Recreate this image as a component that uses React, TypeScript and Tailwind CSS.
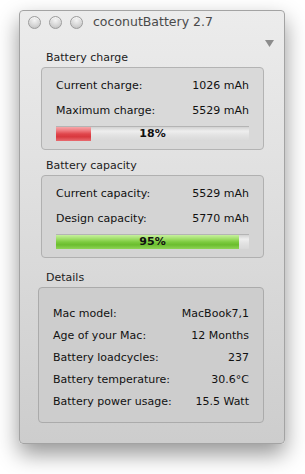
const font = { fontFamily: '"DejaVu Sans", "Liberation Sans", sans-serif' };

function Light() {
  return (
    <div className="h-[13px] w-[13px] rounded-full border border-[#9c9c9c] bg-[radial-gradient(circle_at_50%_30%,#f4f4f4_0%,#d6d6d6_55%,#b9b9b9_100%)] shadow-[inset_0_1px_1px_rgba(255,255,255,0.7)]" />
  );
}

function Row({ label, value, h = "h-[25px]" }: { label: string; value: string; h?: string }) {
  return (
    <div className={`flex ${h} items-center justify-between text-[11px] text-[#111]`}>
      <span>{label}</span>
      <span>{value}</span>
    </div>
  );
}

function Bar({ pct, kind }: { pct: number; kind: "red" | "green" }) {
  const fill =
    kind === "red"
      ? "bg-[linear-gradient(to_bottom,#f6a7aa_0%,#ef7b80_25%,#e0454b_50%,#d8383e_70%,#e86a6f_100%)]"
      : "bg-[linear-gradient(to_bottom,#c6f09e_0%,#a3e06d_25%,#7dcb3f_50%,#6bbd2e_70%,#8fd456_100%)]";
  return (
    <div className="relative mt-[2px] h-[15px] w-full border-t border-[#b4b4b4] bg-[linear-gradient(to_bottom,#d2d2d2_0%,#eeeeee_30%,#e2e2e2_60%,#d8d8d8_100%)]">
      <div className={`h-full ${fill}`} style={{ width: `${pct}%` }} />
      <span className="absolute inset-0 flex items-center justify-center text-[11px] font-bold text-[#111]">
        {pct}%
      </span>
    </div>
  );
}

export default function App() {
  return (
    <div className="h-[474px] w-[305px] overflow-hidden bg-white pl-[19px] pt-[10px]" style={font}>
      <div className="flex h-[434px] w-[266px] flex-col rounded-[4px] border border-[#a3a3a3] bg-[linear-gradient(to_bottom,#ececec_0%,#e3e3e3_30%,#d6d6d6_70%,#cdcdcd_100%)] shadow-[0_10px_22px_rgba(0,0,0,0.42)]">
        {/* title bar */}
        <div className="flex h-[23px] items-center pl-[8px]">
          <div className="flex gap-[8px]">
            <Light />
            <Light />
            <Light />
          </div>
          <span className="ml-[10px] text-[12.5px] text-[#4a4a4a]">coconutBattery 2.7</span>
        </div>

        <div className="flex h-[18px] items-center justify-end pr-[10px]">
          <svg width="9" height="7" viewBox="0 0 9 7">
            <path d="M0 0 L9 0 L4.5 7 Z" fill="#8c8c8c" />
          </svg>
        </div>

        {/* Battery charge */}
        <div className="ml-[26px] flex h-[13px] items-center text-[11px] text-[#222]">Battery charge</div>
        <div className="ml-[21px] mt-[2px] h-[83px] w-[223px] rounded-[4px] border border-[#b3b3b3] bg-[#d9d9d9] px-[14px] pt-[6px]">
          <Row label="Current charge:" value="1026 mAh" />
          <Row label="Maximum charge:" value="5529 mAh" />
          <Bar pct={18} kind="red" />
        </div>

        {/* Battery capacity */}
        <div className="ml-[26px] mt-[10px] flex h-[13px] items-center text-[11px] text-[#222]">Battery capacity</div>
        <div className="ml-[21px] mt-[2px] h-[83px] w-[223px] rounded-[4px] border border-[#b0b0b0] bg-[#d4d4d4] px-[14px] pt-[6px]">
          <Row label="Current capacity:" value="5529 mAh" />
          <Row label="Design capacity:" value="5770 mAh" />
          <Bar pct={95} kind="green" />
        </div>

        {/* Details */}
        <div className="ml-[26px] mt-[14px] flex h-[13px] items-center text-[11px] text-[#222]">Details</div>
        <div className="ml-[18px] mt-[2px] h-[136px] w-[226px] rounded-[4px] border border-[#ababab] bg-[#cdcdcd] px-[14px] pt-[15px]">
          <Row label="Mac model:" value="MacBook7,1" h="h-[22px]" />
          <Row label="Age of your Mac:" value="12 Months" h="h-[22px]" />
          <Row label="Battery loadcycles:" value="237" h="h-[22px]" />
          <Row label="Battery temperature:" value="30.6°C" h="h-[22px]" />
          <Row label="Battery power usage:" value="15.5 Watt" h="h-[22px]" />
        </div>
      </div>
    </div>
  );
}
